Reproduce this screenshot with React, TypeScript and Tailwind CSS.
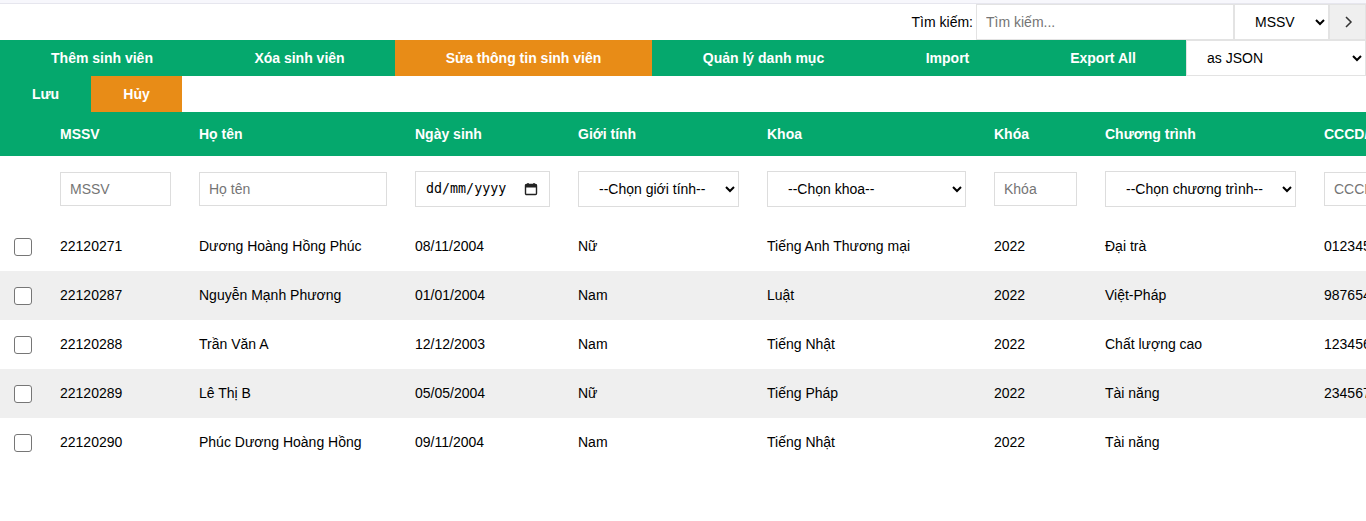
import React from "react";

const GREEN = "bg-[#05a86d]";

const rows = [
  ["22120271", "Dương Hoàng Hồng Phúc", "08/11/2004", "Nữ", "Tiếng Anh Thương mại", "2022", "Đại trà", "012345678901"],
  ["22120287", "Nguyễn Mạnh Phương", "01/01/2004", "Nam", "Luật", "2022", "Việt-Pháp", "987654321098"],
  ["22120288", "Trần Văn A", "12/12/2003", "Nam", "Tiếng Nhật", "2022", "Chất lượng cao", "123456789012"],
  ["22120289", "Lê Thị B", "05/05/2004", "Nữ", "Tiếng Pháp", "2022", "Tài năng", "234567890123"],
  ["22120290", "Phúc Dương Hoàng Hồng", "09/11/2004", "Nam", "Tiếng Nhật", "2022", "Tài năng", ""],
];

const colWidths = [46, 139, 216, 163, 189, 227, 111, 219, 260, 200];

const menu: { t: string; w: string; active?: boolean }[] = [
  { t: "Thêm sinh viên", w: "w-[204px]" },
  { t: "Xóa sinh viên", w: "w-[191px]" },
  { t: "Sửa thông tin sinh viên", w: "w-[257px]", active: true },
  { t: "Quản lý danh mục", w: "w-[223px]" },
  { t: "Import", w: "w-[145px]" },
  { t: "Export All", w: "w-[166px]" },
];

export default function App() {
  return (
    <div className="w-[1366px] overflow-hidden bg-white text-[14px] text-black font-['Liberation_Sans',Arial,sans-serif]">
      <div className="h-[4px] bg-[#f7f7fc] border-b border-[#e6e6ee]" />
      <div className="flex h-9 justify-end items-stretch">
        <label className="flex items-center pr-[3px]">Tìm kiếm:</label>
        <input
          className="w-[258px] border border-[#e3e3e3] px-[9px] outline-none placeholder:text-[#757575]"
          placeholder="Tìm kiếm..."
        />
        <select className="w-[95px] border border-[#e3e3e3] pl-4 pr-1 bg-white" defaultValue="MSSV">
          <option>MSSV</option>
          <option>Họ tên</option>
        </select>
        <button className="w-[37px] bg-[#efefef] border border-[#e3e3e3] flex items-center justify-center">
          <svg width="10" height="14" viewBox="0 0 10 14" fill="none" stroke="#333" strokeWidth="1.5">
            <path d="M3 2l5 5-5 5" />
          </svg>
        </button>
      </div>
      <div className={`flex h-9 ${GREEN}`}>
        {menu.map((m) => (
          <button
            key={m.t}
            className={`${m.w} shrink-0 font-bold text-white whitespace-nowrap ${m.active ? "bg-[#e88c17]" : ""}`}
          >
            {m.t}
          </button>
        ))}
        <select className="flex-1 bg-white border border-[#e3e3e3] pl-4 pr-1" defaultValue="as JSON">
          <option>as JSON</option>
          <option>as XML</option>
        </select>
      </div>
      <div className="flex h-9">
        <button className={`w-[91px] font-bold text-white ${GREEN}`}>Lưu</button>
        <button className="w-[91px] font-bold text-white bg-[#e88c17]">Hủy</button>
      </div>
      <table className="table-fixed border-collapse w-[1770px]">
        <colgroup>
          {colWidths.map((w, i) => (
            <col key={i} style={{ width: w }} />
          ))}
        </colgroup>
        <thead>
          <tr className={`h-[44px] ${GREEN} text-white font-bold text-left`}>
            <th className="pl-[14px]"></th>
            {["MSSV", "Họ tên", "Ngày sinh", "Giới tính", "Khoa", "Khóa", "Chương trình", "CCCD/Hộ chiếu", "Quốc tịch"].map((h) => (
              <th key={h} className="pl-[14px] font-bold whitespace-nowrap">{h}</th>
            ))}
          </tr>
          <tr className="h-[66px]">
            <td></td>
            <td className="pl-[14px]">
              <input className="w-[111px] h-[34px] border border-[#ddd] px-[9px] placeholder:text-[#757575]" placeholder="MSSV" />
            </td>
            <td className="pl-[14px]">
              <input className="w-[188px] h-[34px] border border-[#ddd] px-[9px] placeholder:text-[#757575]" placeholder="Họ tên" />
            </td>
            <td className="pl-[14px]">
              <div className="w-[135px] h-[36px] border border-[#ddd] pl-[10px] pr-[11px] flex items-center justify-between text-[13.33px] font-['DejaVu_Sans_Mono',monospace]">
                <span>dd/mm/yyyy</span>
                <svg width="14" height="14" viewBox="0 0 14 14" fill="none">
                  <rect x="1.5" y="2.5" width="11" height="10" rx="1" stroke="#222" strokeWidth="1.4" />
                  <rect x="1.5" y="2.5" width="11" height="3" fill="#222" />
                  <path d="M4 1v2M10 1v2" stroke="#222" strokeWidth="1.4" />
                </svg>
              </div>
            </td>
            <td className="pl-[14px]">
              <select className="w-[161px] h-[36px] border border-[#ddd] pl-4 pr-1 bg-white" defaultValue="">
                <option value="">--Chọn giới tính--</option>
                <option>Nam</option>
                <option>Nữ</option>
              </select>
            </td>
            <td className="pl-[14px]">
              <select className="w-[199px] h-[36px] border border-[#ddd] pl-4 pr-1 bg-white" defaultValue="">
                <option value="">--Chọn khoa--</option>
              </select>
            </td>
            <td className="pl-[14px]">
              <input className="w-[83px] h-[34px] border border-[#ddd] px-[9px] placeholder:text-[#757575]" placeholder="Khóa" />
            </td>
            <td className="pl-[14px]">
              <select className="w-[191px] h-[36px] border border-[#ddd] pl-4 pr-1 bg-white" defaultValue="">
                <option value="">--Chọn chương trình--</option>
              </select>
            </td>
            <td className="pl-[14px]">
              <input className="w-[150px] h-[34px] border border-[#ddd] px-[9px] placeholder:text-[#757575]" placeholder="CCCD/Hộ chiếu" />
            </td>
            <td></td>
          </tr>
        </thead>
        <tbody>
          {rows.map((r, i) => (
            <tr key={r[0]} className={`h-[49px] ${i % 2 === 1 ? "bg-[#efefef]" : "bg-white"}`}>
              <td className="pl-[14px]">
                <div className="w-[18px] h-[18px] border border-[#767676] rounded-[3px] bg-white" />
              </td>
              {r.map((c, j) => (
                <td key={j} className="pl-[14px] whitespace-nowrap">{c}</td>
              ))}
              <td></td>
            </tr>
          ))}
        </tbody>
      </table>
      <div className="h-[55px]" />
    </div>
  );
}
